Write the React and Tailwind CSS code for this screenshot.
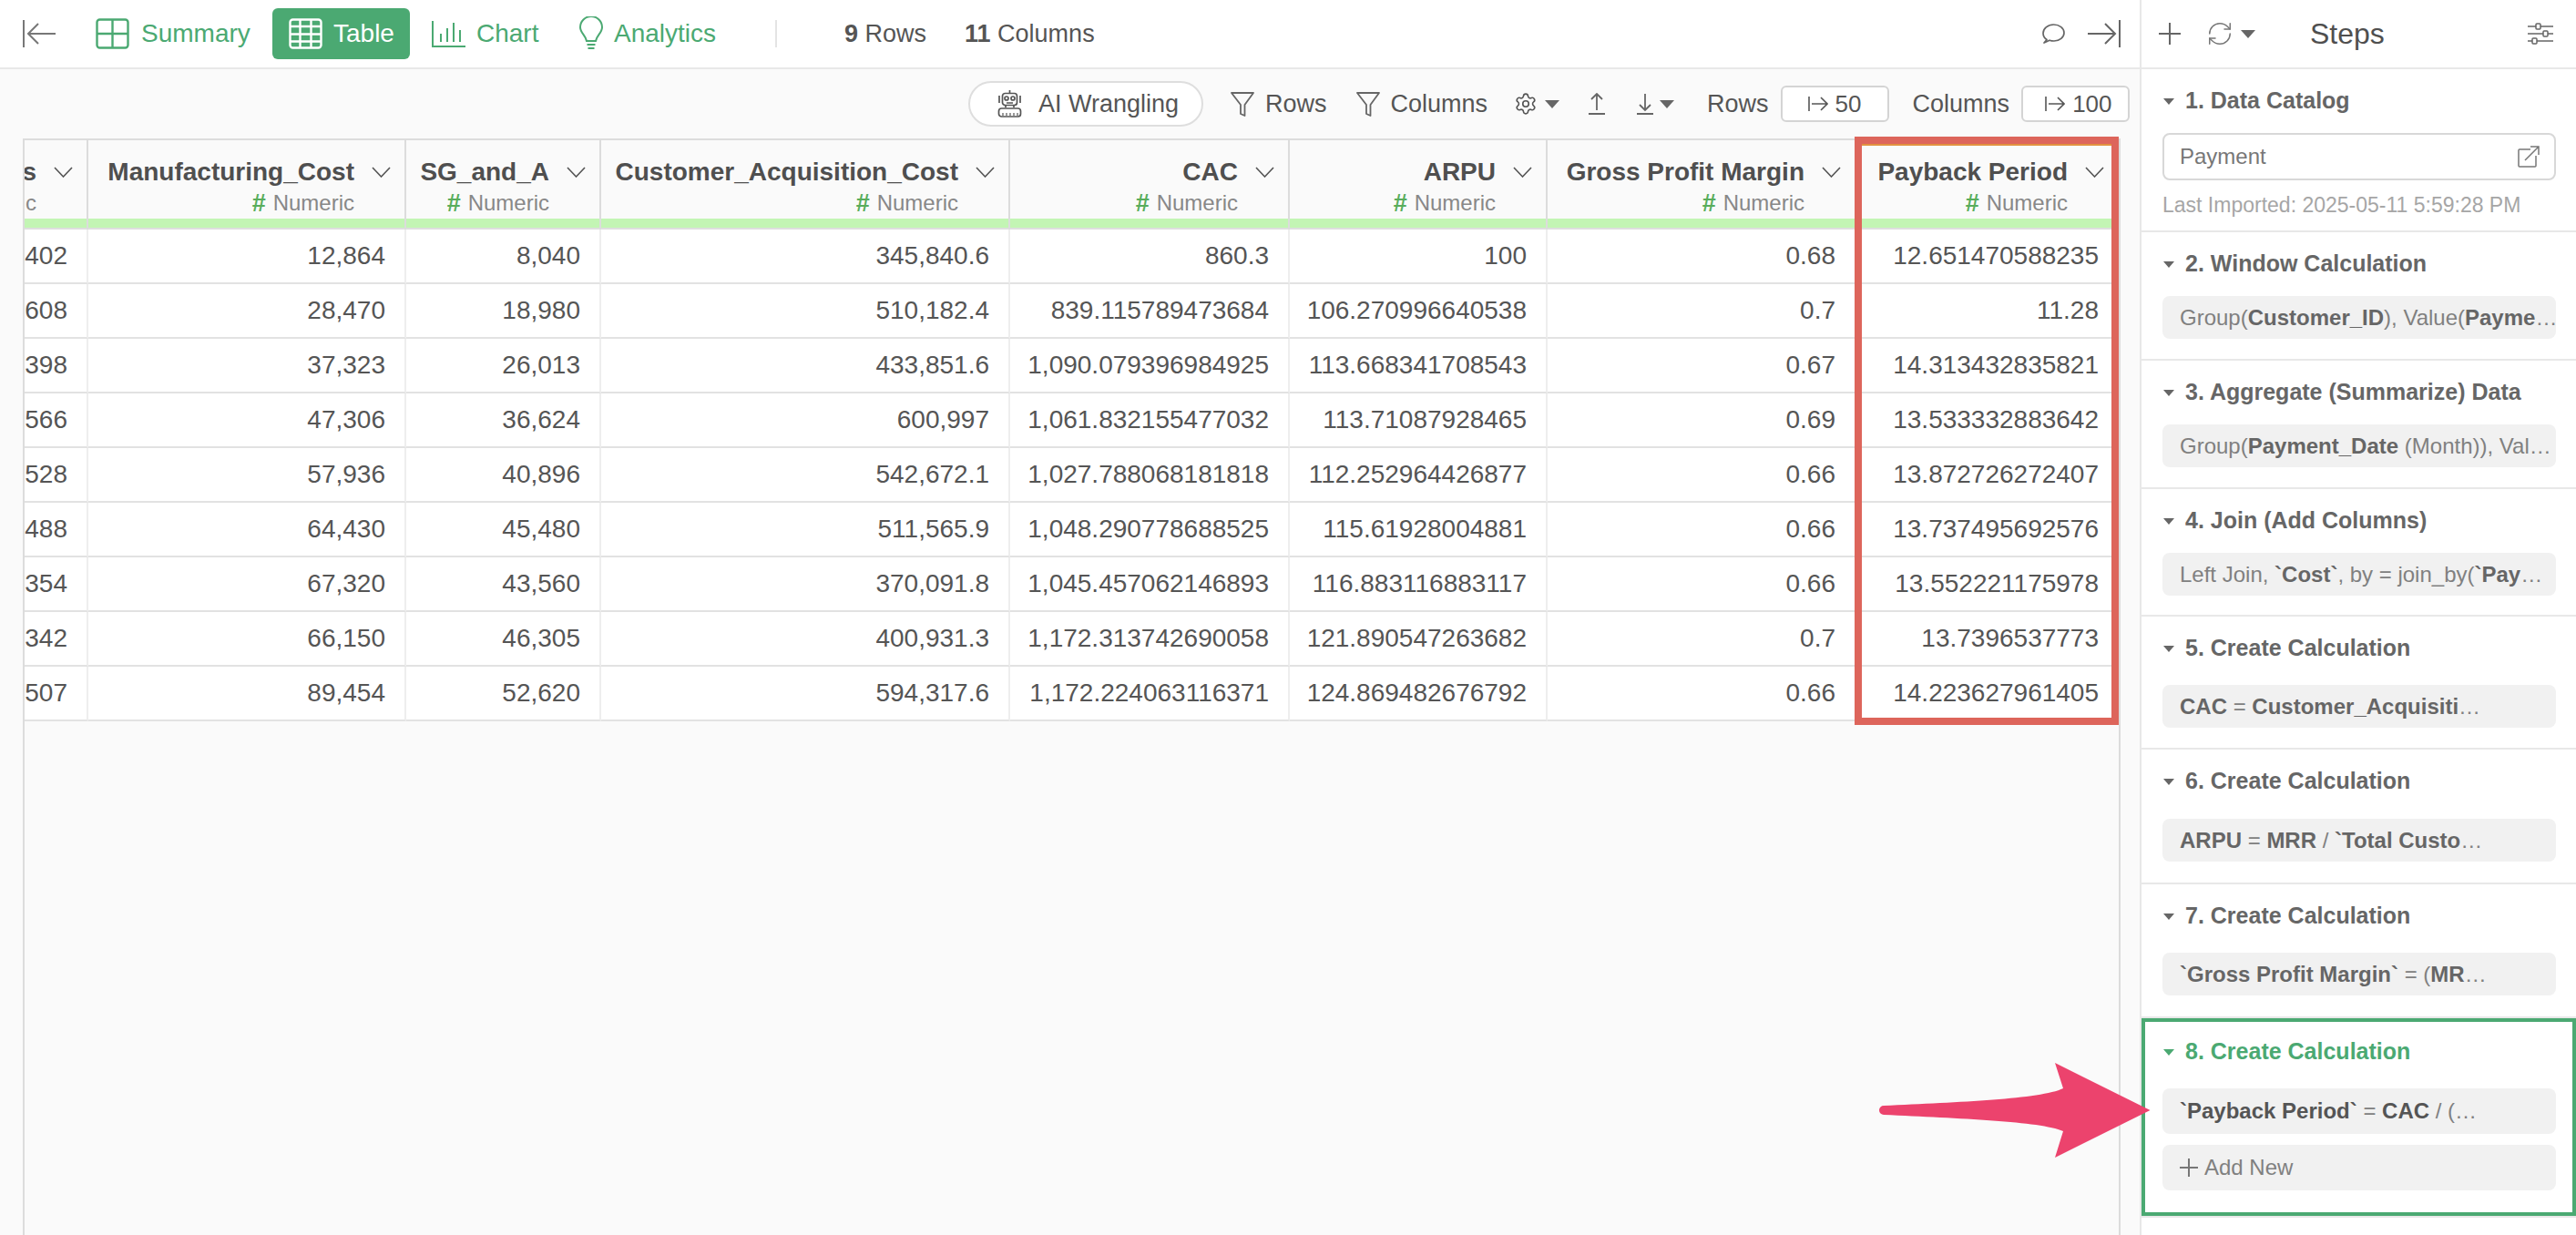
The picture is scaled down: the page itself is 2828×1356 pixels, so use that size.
import { RefreshCw, Settings } from "lucide-react";

const COLUMNS = [
  { name: "s", type: "c", widthOnly: true },
  { name: "Manufacturing_Cost" },
  { name: "SG_and_A" },
  { name: "Customer_Acquisition_Cost" },
  { name: "CAC" },
  { name: "ARPU" },
  { name: "Gross Profit Margin" },
  { name: "Payback Period" },
];

const ROWS = [
  ["402", "12,864", "8,040", "345,840.6", "860.3", "100", "0.68", "12.651470588235"],
  ["608", "28,470", "18,980", "510,182.4", "839.115789473684", "106.270996640538", "0.7", "11.28"],
  ["398", "37,323", "26,013", "433,851.6", "1,090.079396984925", "113.668341708543", "0.67", "14.313432835821"],
  ["566", "47,306", "36,624", "600,997", "1,061.832155477032", "113.71087928465", "0.69", "13.533332883642"],
  ["528", "57,936", "40,896", "542,672.1", "1,027.788068181818", "112.252964426877", "0.66", "13.872726272407"],
  ["488", "64,430", "45,480", "511,565.9", "1,048.290778688525", "115.61928004881", "0.66", "13.737495692576"],
  ["354", "67,320", "43,560", "370,091.8", "1,045.457062146893", "116.883116883117", "0.66", "13.552221175978"],
  ["342", "66,150", "46,305", "400,931.3", "1,172.313742690058", "121.890547263682", "0.7", "13.7396537773"],
  ["507", "89,454", "52,620", "594,317.6", "1,172.224063116371", "124.869482676792", "0.66", "14.223627961405"],
];

const GRID = "grid grid-cols-[70px_349px_214px_449px_307px_283px_339px_287px]";

function Caret({ className = "fill-[#666]" }) {
  return (
    <svg viewBox="0 0 14 9" className={`h-[9px] w-[14px] shrink-0 ${className}`}>
      <path d="M1 1h12L7 8z" strokeLinejoin="round" />
    </svg>
  );
}

function SmallCaret({ className = "" }) {
  return (
    <svg viewBox="0 0 16 9" className={`h-[9px] w-[16px] shrink-0 fill-[#666] ${className}`}>
      <path d="M0 0h16L8 9z" />
    </svg>
  );
}

function Chevron() {
  return (
    <svg viewBox="0 0 21 12" className="h-[12px] w-[21px] shrink-0 fill-none stroke-[#555] stroke-[1.6]">
      <path d="M1 1l9.5 10L20 1" />
    </svg>
  );
}

function Funnel() {
  return (
    <svg viewBox="0 0 26 27" className="h-[27px] w-[26px] shrink-0 fill-none stroke-[#666] stroke-[1.8]">
      <path d="M1 1h24L15.5 14v12l-4.5-2V14z" strokeLinejoin="round" />
    </svg>
  );
}

function LimitArrow() {
  return (
    <svg viewBox="0 0 22 16" className="h-[16px] w-[22px] shrink-0 fill-none stroke-[#555] stroke-[1.6]">
      <path d="M1 0v16M4 8h17M14 1l7 7-7 7" />
    </svg>
  );
}

function RobotIcon() {
  return (
    <svg viewBox="0 0 27 30" className="h-[30px] w-[27px] shrink-0 fill-none stroke-[#555] stroke-[1.7]">
      <path d="M13.5 0v3" />
      <rect x="5.5" y="3.5" width="16" height="13" rx="3" />
      <circle cx="10" cy="9" r="2" />
      <circle cx="17" cy="9" r="2" />
      <path d="M10 14h7M2 6v8M25 6v8M9 17v2M18 17v2" />
      <rect x="1.5" y="20" width="24" height="9" rx="3" />
      <path d="M6 25v3M10 25v3M14 25v3M18 25v3M22 25v3" strokeWidth="1.2" />
    </svg>
  );
}

function ColumnHeader({ name, type = "Numeric", widthOnly, last }) {
  return (
    <div className={`flex h-[98px] flex-col ${last ? "" : "border-r-2 border-[#dcdcdc]"} border-b-2 border-b-[#dedede] bg-[#fafafa]`}>
      <div className="flex h-[86px] flex-col pr-[15px]">
        <div className="mt-[20px] flex h-[30px] items-center justify-end gap-[19px]">
          <span className="whitespace-nowrap text-[28px] font-bold leading-[30px] text-[#4f4f4f]">{name}</span>
          <Chevron />
        </div>
        <div className="mt-[5px] flex h-[28px] items-center justify-end pr-[40px] text-[24px] text-[#888]">
          {!widthOnly && <span className="mr-[8px] text-[27px] font-bold text-[#58ad5c]">#</span>}
          <span>{widthOnly ? type : "Numeric"}</span>
        </div>
      </div>
      <div className="h-[10px] bg-[#c3f5b4]" />
    </div>
  );
}

function Section({ num, title, top = "", bottom = "pb-[22px]", children }) {
  return (
    <section className={`border-b-2 border-[#e8e8e8] pl-[23px] pr-[22px] ${bottom}`}>
      <div className="flex h-[70px] items-center gap-[11px]">
        <Caret />
        <span className="whitespace-nowrap text-[25px] font-bold text-[#666]">
          {num}. {title}
        </span>
      </div>
      <div className={top}>{children}</div>
    </section>
  );
}

function Chip({ children, className = "h-[47px]" }) {
  return (
    <div className={`flex items-center whitespace-nowrap rounded-[8px] bg-[#f1f1f1] pl-[19px] text-[24px] text-[#808080] ${className}`}>
      <span>{children}</span>
    </div>
  );
}

export default function App() {
  return (
    <div className="relative flex h-[1356px] w-[2828px] overflow-hidden bg-white font-['Liberation_Sans',sans-serif] text-[#555]">
      {/* main */}
      <div className="flex w-[2351px] shrink-0 flex-col border-r-2 border-[#e8e8e8]">
        <header className="flex h-[76px] shrink-0 items-center border-b-2 border-[#e8e8e8] pl-[25px]">
          <svg viewBox="0 0 36 30" className="h-[30px] w-[36px] shrink-0 fill-none stroke-[#777] stroke-2">
            <path d="M1 0v30M36 15H7M17 4L6 15l11 11" />
          </svg>

          <div className="ml-[44px] flex w-[169px] items-center gap-[13px] text-[28px] text-[#4ba972]">
            <svg viewBox="0 0 37 34" className="h-[34px] w-[37px] shrink-0 fill-none stroke-[#4ba972] stroke-[2.4]">
              <rect x="1.5" y="1.5" width="34" height="31" rx="3" />
              <path d="M18.5 1v32M1 17h35" />
            </svg>
            Summary
          </div>

          <div className="ml-[25px] flex h-[56px] w-[151px] items-center gap-[12px] rounded-[6px] bg-[#4ba972] pl-[18px] text-[28px] text-white">
            <svg viewBox="0 0 37 34" className="h-[34px] w-[37px] shrink-0 fill-none stroke-white stroke-[2.4]">
              <rect x="1.5" y="1.5" width="34" height="31" rx="3" />
              <path d="M12.5 1v32M24.5 1v32M1 9h35M1 17.5h35M1 25.5h35" />
            </svg>
            Table
          </div>

          <div className="ml-[24px] flex w-[117px] items-center gap-[12px] text-[28px] text-[#4ba972]">
            <svg viewBox="0 0 37 29" className="h-[29px] w-[37px] shrink-0 fill-none stroke-[#4ba972] stroke-2">
              <path d="M1 0v28h36M10 14v9M17 8v15M24 2v21M31 10v13" />
            </svg>
            Chart
          </div>

          <div className="ml-[45px] flex w-[150px] items-center gap-[12px] text-[28px] text-[#4ba972]">
            <svg viewBox="0 0 26 38" className="h-[38px] w-[26px] shrink-0 fill-none stroke-[#4ba972] stroke-2">
              <path d="M8 27C7 21 1 18 1 12a12 12 0 0 1 24 0c0 6-6 9-7 15zM8 27h10M8.5 31h9M9.5 35h7" />
            </svg>
            Analytics
          </div>

          <div className="ml-[65px] h-[30px] w-[2px] bg-[#e4e4e4]" />

          <div className="ml-[74px] whitespace-nowrap text-[27px]">
            <b>9</b> Rows
          </div>
          <div className="ml-[42px] whitespace-nowrap text-[27px]">
            <b>11</b> Columns
          </div>

          <svg viewBox="0 0 26 22" className="ml-auto h-[22px] w-[26px] shrink-0 fill-none stroke-[#666] stroke-[1.7]">
            <path d="M6 17.5C3 15.5 2 13 2 10.500C2 5.500 7 1 13.500 1S25 5 25 10s-5 9-11 9c-2 0-3.500-.300-5-.800L3 21z" strokeLinejoin="round" />
          </svg>
          <svg viewBox="0 0 36 30" className="ml-[25px] mr-[21px] h-[30px] w-[36px] shrink-0 fill-none stroke-[#666] stroke-2">
            <path d="M35 0v30M0 15h29M19 4l11 11-11 11" />
          </svg>
        </header>

        <div className="flex h-[76px] shrink-0 items-center bg-[#fafafa] pl-[1063px]">
          <div className="flex h-[50px] w-[258px] items-center gap-[18px] rounded-full border-2 border-[#dedede] bg-white pl-[30px] text-[27px]">
            <RobotIcon />
            <span className="whitespace-nowrap">AI Wrangling</span>
          </div>
          <div className="ml-[30px] flex items-center gap-[12px] text-[27px]">
            <Funnel />
            Rows
          </div>
          <div className="ml-[32px] flex items-center gap-[12px] text-[27px]">
            <Funnel />
            Columns
          </div>
          <Settings className="ml-[29px] h-[26px] w-[26px] shrink-0" strokeWidth={1.5} />
          <SmallCaret className="ml-[8px]" />
          <svg viewBox="0 0 18 24" className="ml-[32px] h-[24px] w-[18px] shrink-0 fill-none stroke-[#666] stroke-[1.8]">
            <path d="M0 23h18M9 19V1M3 7l6-6 6 6" />
          </svg>
          <svg viewBox="0 0 18 24" className="ml-[35px] h-[24px] w-[18px] shrink-0 fill-none stroke-[#666] stroke-[1.8]">
            <path d="M0 23h18M9 1v18M3 13l6 6 6-6" />
          </svg>
          <SmallCaret className="ml-[7px]" />
          <span className="ml-[36px] text-[27px]">Rows</span>
          <div className="ml-[13px] flex h-[40px] w-[119px] items-center rounded-[6px] border-2 border-[#d4d4d4] bg-white pl-[28px] text-[26px]">
            <LimitArrow />
            <span className="ml-[8px]">50</span>
          </div>
          <span className="ml-[26px] text-[27px]">Columns</span>
          <div className="ml-[13px] flex h-[40px] w-[119px] items-center rounded-[6px] border-2 border-[#d4d4d4] bg-white pl-[24px] text-[26px]">
            <LimitArrow />
            <span className="ml-[8px]">100</span>
          </div>
        </div>

        <div className="flex-1 bg-[#fafafa] pl-[25px] pr-[21px]">
          <div className="h-full overflow-hidden border-x-2 border-t-2 border-[#dcdcdc]">
            <div className={GRID}>
              {COLUMNS.map((c, i) => (
                <ColumnHeader key={c.name} {...c} last={i === COLUMNS.length - 1} />
              ))}
            </div>
            {ROWS.map((row) => (
              <div key={row[0]} className={GRID}>
                {row.map((v, i) => (
                  <div
                    key={i}
                    className={`flex h-[60px] items-center justify-end border-b-2 border-[#e2e2e2] bg-white pr-[21px] text-[28px] text-[#555] ${
                      i === row.length - 1 ? "" : "border-r-2 border-r-[#eeeeee]"
                    }`}
                  >
                    {v}
                  </div>
                ))}
              </div>
            ))}
          </div>
        </div>
      </div>

      {/* steps */}
      <aside className="flex min-w-0 flex-1 flex-col">
        <div className="flex h-[76px] shrink-0 items-center border-b-2 border-[#e8e8e8] pl-[19px]">
          <svg viewBox="0 0 24 24" className="h-[24px] w-[24px] shrink-0 fill-none stroke-[#666] stroke-2">
            <path d="M12 0v24M0 12h24" />
          </svg>
          <RefreshCw className="ml-[28px] h-[30px] w-[30px] shrink-0 text-[#777]" strokeWidth={1.2} />
          <SmallCaret className="ml-[8px]" />
          <span className="ml-[60px] text-[32px] text-[#4f4f4f]">Steps</span>
          <svg viewBox="0 0 28 24" className="ml-[157px] h-[24px] w-[28px] shrink-0 fill-none stroke-[#666] stroke-[1.5]">
            <path d="M0 4h28M0 12h28M0 20h28" />
            <rect x="9" y="1" width="5" height="6" rx="1" fill="white" />
            <rect x="17" y="9" width="5" height="6" rx="1" fill="white" />
            <rect x="5" y="17" width="5" height="6" rx="1" fill="white" />
          </svg>
        </div>

        <Section num={1} title="Data Catalog" top="" bottom="pb-0">
          <div className="flex h-[52px] items-center justify-between rounded-[8px] border-2 border-[#d8d8d8] pl-[17px] pr-[16px] text-[24px] text-[#777]">
            Payment
            <svg viewBox="0 0 24 24" className="h-[24px] w-[24px] shrink-0 fill-none stroke-[#777] stroke-[1.5]">
              <path d="M14 4H2a1 1 0 0 0-1 1v17a1 1 0 0 0 1 1h17a1 1 0 0 0 1-1V11M8 16L23 1M14 1h9v9" />
            </svg>
          </div>
          <div className="flex h-[55px] items-center whitespace-nowrap text-[23px] text-[#a6a6a6]">
            Last Imported: 2025-05-11 5:59:28 PM
          </div>
        </Section>

        <Section num={2} title="Window Calculation">
          <Chip>
            Group(<b className="text-[#666]">Customer_ID</b>), Value(<b className="text-[#666]">Payme</b>…
          </Chip>
        </Section>
        <Section num={3} title="Aggregate (Summarize) Data">
          <Chip>
            Group(<b className="text-[#666]">Payment_Date</b> (Month)), Val…
          </Chip>
        </Section>
        <Section num={4} title="Join (Add Columns)" bottom="pb-[21px]">
          <Chip>
            Left Join, <b className="text-[#666]">`Cost`</b>, by = join_by(<b className="text-[#666]">`Pay</b>…
          </Chip>
        </Section>
        <Section num={5} title="Create Calculation" top="mt-[5px]">
          <Chip>
            <b className="text-[#666]">CAC</b> = <b className="text-[#666]">Customer_Acquisiti</b>…
          </Chip>
        </Section>
        <Section num={6} title="Create Calculation" top="mt-[6px]" bottom="pb-[23px]">
          <Chip>
            <b className="text-[#666]">ARPU</b> = <b className="text-[#666]">MRR</b> / <b className="text-[#666]">`Total Custo</b>…
          </Chip>
        </Section>
        <Section num={7} title="Create Calculation" top="mt-[5px]" bottom="pb-[23px]">
          <Chip>
            <b className="text-[#666]">`Gross Profit Margin`</b> = (<b className="text-[#666]">MR</b>…
          </Chip>
        </Section>

        <section className="h-[219px] shrink-0 border-b-2 border-[#e8e8e8]">
          <div className="h-[217px] border-4 border-[#4ba972] pl-[19px] pr-[18px]">
            <div className="flex h-[66px] items-center gap-[11px]">
              <Caret className="fill-[#4ba972]" />
              <span className="whitespace-nowrap text-[25px] font-bold text-[#4ba972]">8. Create Calculation</span>
            </div>
            <Chip className="mt-[7px] h-[50px]">
              <b className="text-[#555]">`Payback Period`</b> = <b className="text-[#555]">CAC</b> / (…
            </Chip>
            <div className="mt-[12px] flex h-[50px] items-center gap-[7px] rounded-[8px] bg-[#f1f1f1] pl-[19px] text-[24px] text-[#808080]">
              <svg viewBox="0 0 20 20" className="h-[20px] w-[20px] shrink-0 fill-none stroke-[#777] stroke-2">
                <path d="M10 0v20M0 10h20" />
              </svg>
              Add New
            </div>
          </div>
        </section>
      </aside>

      {/* annotations over the page */}
      <div className="pointer-events-none absolute left-[2036px] top-[150px] h-[646px] w-[290px] border-8 border-[#dd655b]">
        <div className="h-[2px] bg-[#e2913f]" />
      </div>
      <svg viewBox="2060 1160 304 116" className="pointer-events-none absolute left-[2060px] top-[1160px] h-[116px] w-[304px] fill-[#ec436d]">
        <path d="M2068 1214C2150 1210 2240 1207 2265 1195L2256 1167L2360.500 1219L2256 1271L2265 1242C2240 1231 2150 1228 2068 1224A5 5 0 0 1 2068 1214Z" />
      </svg>
    </div>
  );
}
